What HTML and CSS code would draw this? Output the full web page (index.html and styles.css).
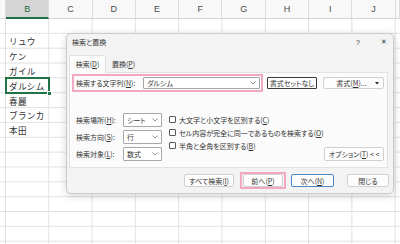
FILE: index.html
```html
<!DOCTYPE html>
<html lang="ja">
<head>
<meta charset="utf-8">
<link rel="stylesheet" href="styles.css">
</head>
<body>
<div class="app">
  <div class="colheads">
    <div class="ch"></div>
    <div class="ch ch-sel">B</div>
    <div class="ch">C</div>
    <div class="ch">D</div>
    <div class="ch">E</div>
    <div class="ch">F</div>
    <div class="ch">G</div>
    <div class="ch">H</div>
    <div class="ch">I</div>
    <div class="ch">J</div>
    <div class="ch"></div>
  </div>
  <div class="cells">
    <div class="cell r2">リュウ</div>
    <div class="cell r3">ケン</div>
    <div class="cell r4">ガイル</div>
    <div class="cell r5 cell-sel">ダルシム<span class="handle"></span></div>
    <div class="cell r6">春麗</div>
    <div class="cell r7">ブランカ</div>
    <div class="cell r8">本田</div>
  </div>

  <div class="dialog">
    <div class="titlebar">
      <span class="title">検索と置換</span>
      <span class="help">?</span>
      <span class="close">✕</span>
    </div>
    <div class="tabs">
      <div class="tab tab-active">検索(<u>D</u>)</div>
      <div class="tab">置換(<u>P</u>)</div>
    </div>
    <div class="panel">
      <div class="search-row">
        <div class="find-box">
          <span class="find-label">検索する文字列(<u>N</u>):</span>
          <div class="combo find-input">
            <span class="combo-text">ダルシム</span>
            <svg class="chev" width="6" height="4" viewBox="0 0 6 4"><polyline points="0.5,0.5 3,3 5.5,0.5" fill="none" stroke="#777" stroke-width="0.8"/></svg>
          </div>
        </div>
        <div class="btn btn-noformat">書式セットなし</div>
        <div class="btn btn-format"><span class="fmt-text">書式(<u>M</u>)...</span><svg class="tri" width="4" height="3" viewBox="0 0 4 3"><polygon points="0,0 4,0 2,2.5" fill="#222"/></svg></div>
      </div>
      <div class="options">
        <div class="fields">
          <div class="field"><span class="field-label">検索場所(<u>H</u>):</span><div class="combo sel"><span class="combo-text">シート</span><svg class="chev" width="6" height="4" viewBox="0 0 6 4"><polyline points="0.5,0.5 3,3 5.5,0.5" fill="none" stroke="#777" stroke-width="0.8"/></svg></div></div>
          <div class="field"><span class="field-label">検索方向(<u>S</u>):</span><div class="combo sel"><span class="combo-text">行</span><svg class="chev" width="6" height="4" viewBox="0 0 6 4"><polyline points="0.5,0.5 3,3 5.5,0.5" fill="none" stroke="#777" stroke-width="0.8"/></svg></div></div>
          <div class="field"><span class="field-label">検索対象(<u>L</u>):</span><div class="combo sel"><span class="combo-text">数式</span><svg class="chev" width="6" height="4" viewBox="0 0 6 4"><polyline points="0.5,0.5 3,3 5.5,0.5" fill="none" stroke="#777" stroke-width="0.8"/></svg></div></div>
        </div>
        <div class="checks">
          <div class="check"><span class="box"></span>大文字と小文字を区別する(<u>C</u>)</div>
          <div class="check"><span class="box"></span>セル内容が完全に同一であるものを検索する(<u>O</u>)</div>
          <div class="check"><span class="box"></span>半角と全角を区別する(<u>B</u>)</div>
        </div>
        <div class="btn btn-options">オプション(<u>T</u>) &lt; &lt;</div>
      </div>
    </div>
    <div class="actions">
      <div class="btn btn-all">すべて検索(<u>I</u>)</div>
      <div class="mark"><div class="btn btn-prev">前へ(<u>P</u>)</div></div>
      <div class="btn btn-next">次へ(<u>N</u>)</div>
      <div class="btn btn-close">閉じる</div>
    </div>
  </div>
</div>
</body>
</html>
```

FILE: styles.css
```css
* { box-sizing: border-box; }
html, body { margin: 0; padding: 0; }
body {
  width: 400px;
  height: 244px;
  overflow: hidden;
  background: #fff;
  font-family: "Noto Sans CJK JP", "Noto Sans", sans-serif;
}
u { text-decoration: underline; text-underline-offset: 1px; text-decoration-thickness: 0.5px; }

.app {
  position: relative;
  width: 400px;
  height: 244px;
}

.colheads {
  display: grid;
  grid-template-columns: 6px repeat(9, 43.3px) 1fr;
  height: 19px;
  background: #f8f8f8;
  border-bottom: 1px solid #d6d6d6;
}
.ch {
  border-right: 1px solid #dcdcdc;
  font-family: "Liberation Sans", "Noto Sans", sans-serif;
  font-size: 9px;
  color: #4a4a4a;
  display: flex;
  align-items: center;
  justify-content: center;
}
.ch-sel {
  background: #d5d5d5;
  color: #1e6b42;
  border-bottom: 2px solid #217346;
  margin-bottom: -1px;
}

.cells {
  display: grid;
  grid-template-columns: 6px 43.3px;
  grid-template-rows: repeat(15, 14.85px);
  height: 225px;
  background-image:
    linear-gradient(to right, #e1e1e1 1px, transparent 1px),
    linear-gradient(to bottom, transparent 13.85px, #e1e1e1 13.85px);
  background-size: 43.3px 14.85px, 43.3px 14.85px;
  background-position: 5px 0, 0 0;
}
.cell {
  grid-column: 2;
  font-size: 8.6px;
  color: #333;
  padding-left: 3px;
  display: flex;
  align-items: center;
  letter-spacing: 0.3px;
}
.r2 { grid-row: 2; }
.r3 { grid-row: 3; }
.r4 { grid-row: 4; }
.r5 { grid-row: 5; }
.r6 { grid-row: 6; }
.r7 { grid-row: 7; }
.r8 { grid-row: 8; }
.cell-sel {
  position: relative;
  outline: 2px solid #217346;
  outline-offset: -1px;
}
.handle {
  position: absolute;
  right: -3px;
  bottom: -3px;
  width: 5px;
  height: 5px;
  background: #217346;
  border: 1px solid #fff;
}

.dialog {
  position: absolute;
  left: 66px;
  top: 33px;
  width: 328px;
  height: 161px;
  background: #f3f3f3;
  border: 1px solid #cbcbcb;
  border-radius: 5px;
  box-shadow: 0 2px 8px rgba(0, 0, 0, 0.16);
  font-size: 7px;
  font-feature-settings: "palt";
  color: #333;
  display: flex;
  flex-direction: column;
}

.titlebar {
  height: 17px;
  display: flex;
  align-items: center;
  padding-left: 5px;
  padding-bottom: 1px;
}
.help {
  margin-left: auto;
  margin-right: 20px;
  font-size: 7px;
  font-family: "Liberation Sans", sans-serif;
}
.close {
  width: 8px;
  margin-right: 5px;
  text-align: center;
  font-size: 7px;
  font-family: "DejaVu Sans", sans-serif;
}

.tabs {
  display: flex;
  margin-top: 4px;
  margin-left: 2px;
  height: 17px;
}
.tab {
  width: 35px;
  display: flex;
  align-items: center;
  justify-content: center;
}
.tab-active {
  position: relative;
  width: 37px;
  background: #fbfbfb;
  border: 1px solid #e2e2e2;
  border-bottom: 1px solid #fbfbfb;
  border-radius: 2px 2px 0 0;
  height: 18px;
  margin-bottom: -1px;
}

.panel {
  margin: 0 5px 0 2px;
  background: #fbfbfb;
  border: 1px solid #e2e2e2;
  padding: 1px 3px 6px 2px;
}

.search-row {
  display: flex;
  align-items: center;
  height: 18px;
}
.find-box {
  width: 191px;
  height: 18px;
  border: 2px solid #f1a8c5;
  display: flex;
  align-items: center;
  padding-left: 2px;
}
.find-label { width: 67px; white-space: nowrap; }
.combo {
  background: #fff;
  border: 1px solid #a8a8a8;
  border-radius: 1px;
  display: flex;
  align-items: center;
  padding: 0 3px;
}
.combo-text { flex: 1; white-space: nowrap; }
.find-input { width: 117px; height: 12px; }
.chev { display: block; }

.btn {
  background: #fdfdfd;
  border: 1px solid #d0d0d0;
  border-radius: 2px;
  display: flex;
  align-items: center;
  justify-content: center;
  white-space: nowrap;
}
.btn-noformat {
  margin-left: 4px;
  width: 50px;
  height: 12px;
  border-color: #3a3a3a;
  border-radius: 1px;
}
.btn-format {
  margin-left: 6px;
  width: 61px;
  height: 12px;
  padding-left: 4px;
  padding-right: 4px;
}
.fmt-text { flex: 1; text-align: center; }
.tri { display: block; }

.options {
  display: flex;
  align-items: flex-start;
  margin-top: 21px;
}
.fields {
  display: flex;
  flex-direction: column;
  gap: 3px;
  padding-left: 4px;
}
.field {
  display: flex;
  align-items: center;
  height: 14px;
}
.field-label { width: 47px; white-space: nowrap; }
.sel { width: 39px; height: 14px; }

.checks {
  margin-left: 7px;
  display: flex;
  flex-direction: column;
}
.check {
  height: 13px;
  display: flex;
  align-items: center;
  white-space: nowrap;
}
.box {
  width: 7px;
  height: 7px;
  border: 1px solid #5a5a5a;
  border-radius: 1px;
  background: #fff;
  margin-right: 3px;
}
.btn-options {
  margin-left: auto;
  align-self: flex-end;
  width: 60px;
  height: 14px;
}

.actions {
  margin-top: 4px;
  height: 17px;
  display: flex;
  align-items: center;
  justify-content: flex-end;
  padding-right: 4px;
}
.actions .btn { height: 13px; }
.btn-all { width: 50px; }
.mark {
  margin-left: 6px;
  width: 46px;
  height: 17px;
  border: 2px solid #f1a8c5;
  padding: 0 1px;
  display: flex;
  align-items: center;
}
.btn-prev { width: 40px; }
.btn-next {
  margin-left: 5px;
  width: 43px;
  border-color: #4a86c8;
}
.btn-close {
  margin-left: 13px;
  width: 42px;
}
```
